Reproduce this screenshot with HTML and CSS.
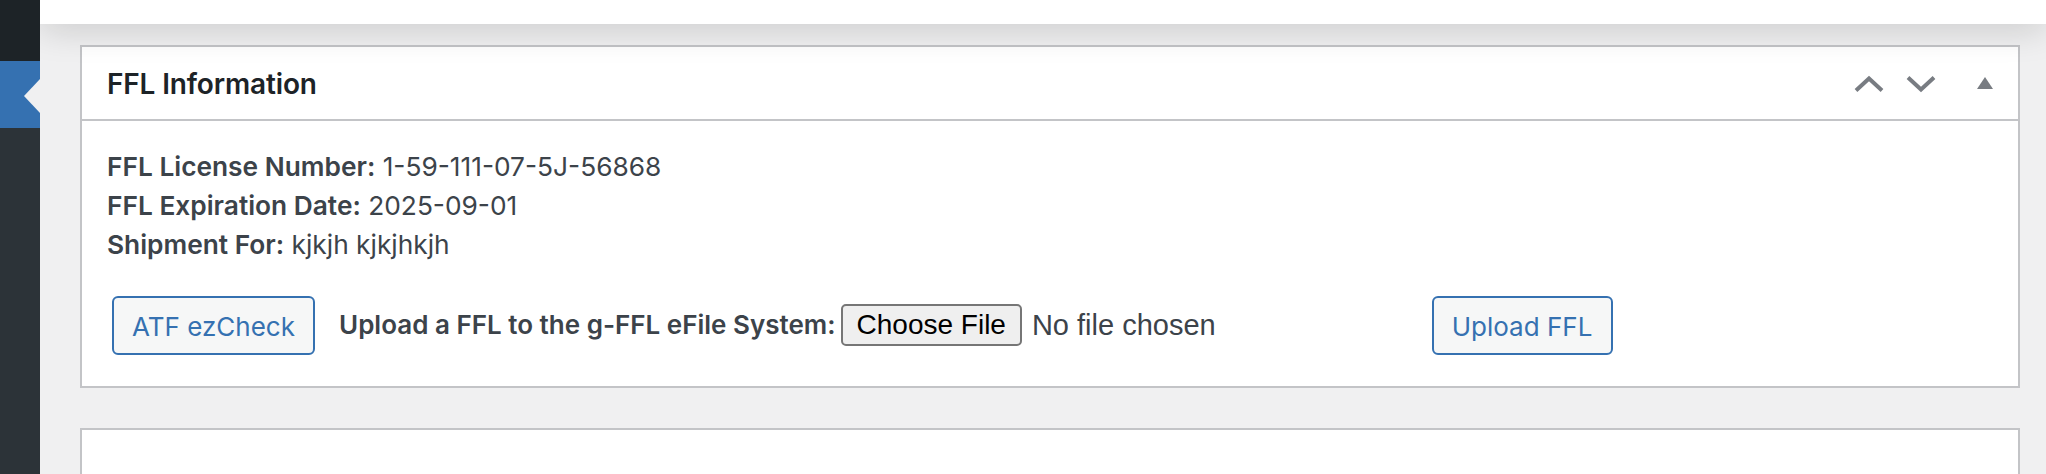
FILE: index.html
```html
<!DOCTYPE html>
<html lang="en">
<head>
<meta charset="utf-8">
<title>FFL Information</title>
<link rel="stylesheet" href="styles.css">
</head>
<body>
<div class="layout">
  <aside class="adminmenu">
    <div class="menu-top"></div>
    <div class="menu-current"></div>
    <div class="menu-rest"></div>
  </aside>
  <main class="main">
    <div class="topbar"></div>
    <div class="content">
      <section class="postbox">
        <div class="postbox-header">
          <h2 class="hndle">FFL Information</h2>
          <div class="handle-actions">
            <button class="handle-btn move-up" aria-label="Move up">
              <svg width="30" height="18" viewBox="0 0 30 18"><polyline points="2,15.5 15,3.5 28,15.5" fill="none" stroke="#787c82" stroke-width="4"/></svg>
            </button>
            <button class="handle-btn move-down" aria-label="Move down">
              <svg width="30" height="18" viewBox="0 0 30 18"><polyline points="2,2.5 15,14.5 28,2.5" fill="none" stroke="#787c82" stroke-width="4"/></svg>
            </button>
            <button class="handle-btn toggle" aria-label="Toggle panel">
              <svg width="16" height="12" viewBox="0 0 16 12"><polygon points="8,0 16,12 0,12" fill="#787c82"/></svg>
            </button>
          </div>
        </div>
        <div class="inside">
          <div class="info-line"><strong>FFL License Number:</strong> 1-59-111-07-5J-56868</div>
          <div class="info-line"><strong>FFL Expiration Date:</strong> 2025-09-01</div>
          <div class="info-line"><strong>Shipment For:</strong> kjkjh kjkjhkjh</div>
          <div class="actions-row">
            <button class="wp-btn atf">ATF ezCheck</button>
            <strong class="upload-label">Upload a FFL to the g-FFL eFile System:</strong>
            <span class="file-input">
              <button class="file-btn">Choose File</button>
              <span class="file-name">No file chosen</span>
            </span>
            <button class="wp-btn upload">Upload FFL</button>
          </div>
        </div>
      </section>
      <section class="postbox postbox-next"></section>
    </div>
  </main>
</div>
</body>
</html>
```

FILE: styles.css
```css
* { box-sizing: border-box; }

html, body {
  margin: 0;
  padding: 0;
  height: 474px;
  overflow: hidden;
  background: #f0f0f1;
  font-family: Inter, "Noto Sans", "Liberation Sans", sans-serif;
  color: #3c434a;
}

.layout {
  display: flex;
  height: 474px;
  overflow: hidden;
}

.adminmenu {
  width: 40px;
  flex: 0 0 40px;
  display: flex;
  flex-direction: column;
  position: relative;
  z-index: 3;
}

.menu-top { height: 61px; background: #1d2327; }

.menu-current {
  height: 67px;
  background: #3571b1;
  position: relative;
}

.menu-current::after {
  content: "";
  position: absolute;
  right: 0;
  top: 18px;
  border-style: solid;
  border-width: 17px 16px 17px 0;
  border-color: transparent #f0f0f1 transparent transparent;
}

.menu-rest { flex: 1; background: #2c3338; }

.main {
  flex: 1;
  min-width: 0;
  display: flex;
  flex-direction: column;
  overflow: hidden;
}

.topbar {
  height: 24px;
  flex: 0 0 24px;
  background: #fff;
  box-shadow: 0 2px 36px rgba(0, 0, 0, 0.22);
  position: relative;
  z-index: 2;
}

.content {
  padding: 21px 26px 0 40px;
}

.postbox {
  background: #fff;
  border: 2px solid #c3c4c7;
  margin-bottom: 40px;
}

.postbox-next { height: 120px; }

.postbox-header {
  height: 74px;
  border-bottom: 2px solid #c3c4c7;
  display: flex;
  align-items: center;
  justify-content: space-between;
  padding-left: 25px;
  padding-top: 1px;
}

.hndle {
  margin: 0;
  font-size: 28px;
  font-weight: 600;
  color: #1d2327;
  letter-spacing: -0.15px;
}

.handle-actions {
  display: flex;
  align-items: center;
  height: 100%;
}

.handle-btn {
  background: none;
  border: 0;
  padding: 0;
  height: 100%;
  display: flex;
  align-items: center;
  justify-content: center;
}

.move-up { width: 52px; }
.move-down { width: 52px; }
.toggle { width: 71px; padding-left: 4px; padding-bottom: 2px; }

.inside {
  padding: 26px 24px 31px 25px;
}

.info-line {
  font-size: 26.3px;
  line-height: 39px;
}

.info-line strong { font-weight: 600; }

.actions-row {
  display: flex;
  align-items: center;
  margin-top: 32px;
}

.wp-btn {
  height: 59px;
  padding: 2px 0 0;
  border: 2px solid #3571b1;
  border-radius: 6px;
  background: #f6f7f7;
  color: #3571b1;
  font-family: Inter, "Noto Sans", "Liberation Sans", sans-serif;
  font-size: 26px;
  text-align: center;
}

.atf { margin-left: 5px; width: 203px; }

.upload-label {
  margin-left: 24px;
  font-size: 26px;
  font-weight: 600;
  margin-bottom: 2px;
}

.file-input {
  margin-left: 5px;
  width: 567px;
  display: flex;
  align-items: center;
}

.file-btn {
  height: 42px;
  padding: 0 14px;
  border: 2px solid #767676;
  border-radius: 5px;
  background: #efefef;
  color: #000;
  font-family: "Liberation Sans", Arial, sans-serif;
  font-size: 28px;
  margin-top: -2px;
}

.file-name {
  margin-left: 10px;
  font-family: "Liberation Sans", Arial, sans-serif;
  font-size: 29px;
  color: #3c434a;
}

.upload { margin-left: 24px; width: 181px; }
```
